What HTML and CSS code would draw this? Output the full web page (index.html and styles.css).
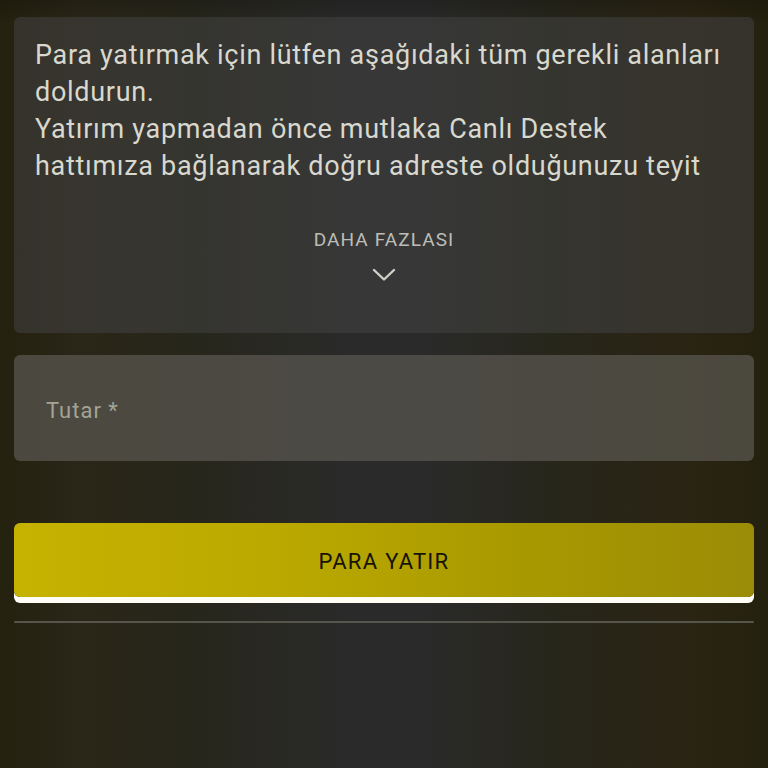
FILE: index.html
```html
<!DOCTYPE html>
<html lang="tr">
<head>
<meta charset="utf-8">
<title>Para Yatır</title>
<link rel="stylesheet" href="styles.css">
</head>
<body>
<main class="page">
  <section class="info">
    <p class="info-text">Para yatırmak için lütfen aşağıdaki tüm gerekli alanları doldurun.<br>Yatırım yapmadan önce mutlaka Canlı Destek hattımıza bağlanarak doğru adreste olduğunuzu teyit</p>
    <div class="more">
      <span class="more-label">DAHA FAZLASI</span>
      <svg class="chevron" width="24" height="14" viewBox="0 0 24 14" aria-hidden="true">
        <polyline points="2,2 12,11.5 22,2" fill="none" stroke="#d0d0c8" stroke-width="2.4" stroke-linecap="round" stroke-linejoin="round"/>
      </svg>
    </div>
  </section>
  <label class="field">
    <span class="field-label">Tutar *</span>
  </label>
  <button class="submit" type="button">PARA YATIR</button>
  <div class="divider"></div>
</main>
</body>
</html>
```
FILE: styles.css
```css
html, body {
  margin: 0;
  padding: 0;
  height: 100%;
}

body {
  font-family: Roboto, "Noto Sans", "Liberation Sans", sans-serif;
  background:
    linear-gradient(to bottom, rgba(0,0,0,0.18) 0, rgba(0,0,0,0) 24px),
    linear-gradient(to right, #24210f 0%, #2a2618 10%, #27261b 25%, #2a2a2a 45%, #2a2a2a 55%, #27261b 72%, #2a2413 90%, #24210f 100%);
  min-height: 768px;
}

.page {
  display: flex;
  flex-direction: column;
  padding: 17px 14px 0 14px;
}

.info {
  box-sizing: border-box;
  height: 316px;
  border-radius: 6px;
  background: rgba(66, 66, 66, 0.55);
  padding: 20px 21px 0 21px;
  display: flex;
  flex-direction: column;
}

.info-text {
  margin: 0;
  font-size: 27px;
  letter-spacing: 0.7px;
  line-height: 37px;
  max-height: 148px;
  overflow: hidden;
  color: #d8d8ce;
}

.more {
  margin-top: 44px;
  display: flex;
  flex-direction: column;
  align-items: center;
}

.more-label {
  font-size: 19px;
  letter-spacing: 1.1px;
  line-height: 22px;
  color: #bdbdb6;
}

.chevron {
  margin-top: 17px;
  display: block;
}

.field {
  box-sizing: border-box;
  margin-top: 22px;
  height: 106px;
  border-radius: 6px;
  background: rgba(90, 88, 80, 0.72);
  padding-left: 32px;
  display: flex;
  align-items: center;
}

.field-label {
  font-size: 22px;
  letter-spacing: 1px;
  color: #a3a397;
  padding-top: 4px;
}

.submit {
  margin-top: 62px;
  height: 74px;
  border: 0;
  border-radius: 6px;
  background: linear-gradient(to right, #c6b200 0%, #bba900 35%, #a89800 70%, #9b8c08 100%);
  box-shadow: 0 6px 0 #fffdf6;
  font-family: Roboto, "Noto Sans", "Liberation Sans", sans-serif;
  font-size: 22px;
  letter-spacing: 1.3px;
  color: #15130a;
  padding: 2px 0 0 0;
  cursor: pointer;
}

.divider {
  margin-top: 24px;
  height: 2px;
  background: #56554c;
  border-radius: 1px;
}
```
